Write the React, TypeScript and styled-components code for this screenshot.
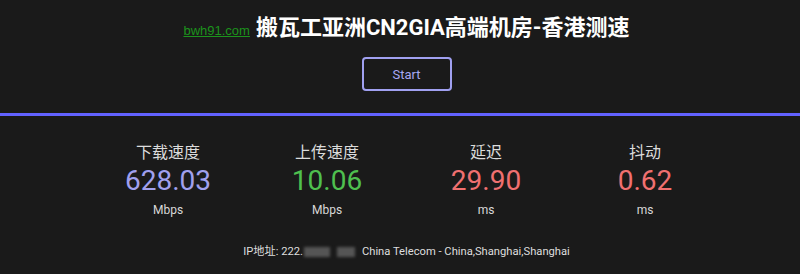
import React from "react";
import styled, { createGlobalStyle } from "styled-components";

const GlobalStyle = createGlobalStyle`
  html, body {
    margin: 0;
    padding: 0;
    background: #1a1a1a;
  }
  body {
    font-family: Roboto, "Noto Sans CJK SC", sans-serif;
    color: #e0e0e0;
  }
`;

const Page = styled.div`
  width: 800px;
  height: 274px;
  background: #1a1a1a;
  overflow: hidden;
`;

const Header = styled.header`
  display: flex;
  flex-direction: column;
  align-items: center;
  padding: 15px 0 22px 13px;
  border-bottom: 3px solid #6262ff;
`;

const Title = styled.h1`
  margin: 0;
  display: flex;
  align-items: baseline;
  gap: 6px;
  font-size: 22px;
  line-height: 26px;
  font-weight: 700;
  color: #ffffff;
  font-family: Roboto, "Noto Sans CJK SC", sans-serif;
`;

const SiteLink = styled.a`
  font-family: "Liberation Sans", Arial, sans-serif;
  font-size: 13px;
  font-weight: 400;
  color: #1c931c;
  text-decoration: underline;
`;

const StartButton = styled.button`
  margin-top: 13px;
  width: 90px;
  height: 34px;
  background: transparent;
  border: 2px solid #a0a0f0;
  border-radius: 4px;
  color: #a8a8f4;
  font-family: Roboto, sans-serif;
  font-size: 13px;
  cursor: pointer;
`;

const Content = styled.main`
  padding-left: 13px;
  display: flex;
  flex-direction: column;
  align-items: center;
`;

const Stats = styled.div`
  display: grid;
  grid-template-columns: repeat(4, 159px);
  padding-top: 24px;
`;

const Stat = styled.div`
  display: flex;
  flex-direction: column;
  align-items: center;
`;

const Label = styled.div`
  font-family: "Noto Sans CJK SC", sans-serif;
  font-size: 16px;
  line-height: 22px;
  color: #dcdcdc;
`;

const Value = styled.div<{ $color: string }>`
  font-family: Roboto, sans-serif;
  font-size: 28px;
  line-height: 32px;
  color: ${(p) => p.$color};
  margin-top: 3px;
`;

const Unit = styled.div`
  font-family: Roboto, sans-serif;
  font-size: 12px;
  line-height: 16px;
  color: #d8d8d8;
  margin-top: 5px;
`;

const IpLine = styled.div`
  margin-top: 26px;
  font-family: Roboto, "Noto Sans CJK SC", sans-serif;
  font-size: 11.2px;
  line-height: 16px;
  color: #dedede;
  display: flex;
  align-items: center;
`;

const Blur = styled.span<{ $w: number; $gap: number }>`
  display: inline-block;
  height: 10px;
  background: #555555;
  filter: blur(1.5px);
  margin-left: ${(p) => p.$gap}px;
  width: ${(p) => p.$w}px;
`;

const Isp = styled.span`
  margin-left: 7px;
`;

const stats = [
  { label: "下载速度", value: "628.03", unit: "Mbps", color: "#a0a0ee" },
  { label: "上传速度", value: "10.06", unit: "Mbps", color: "#4fc04f" },
  { label: "延迟", value: "29.90", unit: "ms", color: "#f07070" },
  { label: "抖动", value: "0.62", unit: "ms", color: "#f07070" },
];

export default function App() {
  return (
    <Page>
      <GlobalStyle />
      <Header>
        <Title>
          <SiteLink href="#">bwh91.com</SiteLink>
          <span>搬瓦工亚洲CN2GIA高端机房-香港测速</span>
        </Title>
        <StartButton>Start</StartButton>
      </Header>
      <Content>
        <Stats>
          {stats.map((s) => (
            <Stat key={s.label}>
              <Label>{s.label}</Label>
              <Value $color={s.color}>{s.value}</Value>
              <Unit>{s.unit}</Unit>
            </Stat>
          ))}
        </Stats>
        <IpLine>
          <span>IP地址: 222.</span>
          <Blur $w={26} $gap={1} />
          <Blur $w={18} $gap={7} />
          <Isp>China Telecom - China,Shanghai,Shanghai</Isp>
        </IpLine>
      </Content>
    </Page>
  );
}
